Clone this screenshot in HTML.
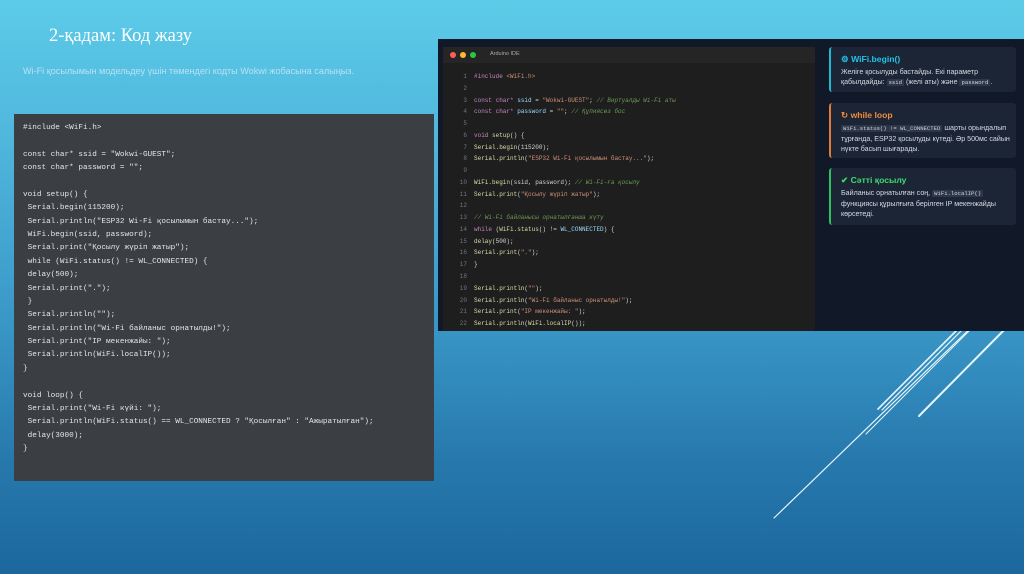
<!DOCTYPE html>
<html><head><meta charset="utf-8"><style>
*{margin:0;padding:0;box-sizing:border-box}
body{width:1024px;height:574px;overflow:hidden;position:relative;background:linear-gradient(180deg,#5ccbe8 0%,#4fb6dc 25%,#3a98c8 55%,#2779ad 80%,#1b679e 100%);font-family:"Liberation Sans","Noto Sans CJK SC",sans-serif}
.title{position:absolute;left:49px;top:26px;font-family:"Liberation Serif","Noto Serif CJK SC",serif;font-size:18.5px;color:#fff}
.sub{position:absolute;left:23px;top:66px;font-size:9.1px;color:#b8e2f2}
.code{position:absolute;left:14px;top:114px;width:420px;height:367px;background:#3b3e42;padding:8px 0 0 9px;font-family:"Liberation Mono","DejaVu Sans Mono",monospace;font-size:7.7px;line-height:13.38px;color:#e6e6e6;white-space:pre}
.panel{position:absolute;left:438px;top:39px;width:586px;height:292px;background:#111827}
.ide{position:absolute;left:5px;top:8px;width:372px;height:284px;background:#1e1e1e}
.bar{height:16px;background:#252526;position:relative}
.dot{position:absolute;top:5px;width:6px;height:6px;border-radius:50%}
.bar span{position:absolute;left:47px;top:4px;font-size:5.5px;color:#aaa}
.ln{position:absolute;left:0;top:24px;width:24px;text-align:right;font-family:"Liberation Mono",monospace;font-size:6px;line-height:11.76px;color:#6e7681;white-space:pre}
.src{position:absolute;left:31px;top:24px;font-family:"Liberation Mono",monospace;font-size:6px;line-height:11.76px;color:#d4d4d4;white-space:pre}
.k{color:#c586c0}.f{color:#dcdcaa}.s{color:#ce9178}.c{color:#6a9955;font-style:italic}.v{color:#9cdcfe}
.card{position:absolute;left:391px;width:187px;background:#1c2536;border-radius:3px;padding:6px 6px 5px 10px;font-size:7.1px;line-height:10px;color:#d6dbe3}
.card h4{font-size:8.6px;font-weight:bold;margin-bottom:2px;line-height:12px}
.card code{font-family:"Liberation Mono",monospace;font-size:5.6px;background:#2d3748;padding:0 2px;color:#cfd6e0}
</style></head><body>
<div class="title">2-қадам: Код жазу</div>
<div class="sub">Wi-Fi қосылымын модельдеу үшін төмендегі кодты Wokwi жобасына салыңыз.</div>
<div class="code">#include &lt;WiFi.h&gt;

const char* ssid = "Wokwi-GUEST";
const char* password = "";

void setup() {
 Serial.begin(115200);
 Serial.println("ESP32 Wi-Fi қосылымын бастау...");
 WiFi.begin(ssid, password);
 Serial.print("Қосылу жүріп жатыр");
 while (WiFi.status() != WL_CONNECTED) {
 delay(500);
 Serial.print(".");
 }
 Serial.println("");
 Serial.println("Wi-Fi байланыс орнатылды!");
 Serial.print("IP мекенжайы: ");
 Serial.println(WiFi.localIP());
}

void loop() {
 Serial.print("Wi-Fi күйі: ");
 Serial.println(WiFi.status() == WL_CONNECTED ? "Қосылған" : "Ажыратылған");
 delay(3000);
}</div>
<svg style="position:absolute;left:0;top:0" width="1024" height="574">
<g stroke="#e8f6fc" stroke-linecap="round">
<line x1="774" y1="518" x2="1010" y2="290" stroke-width="1.2"/>
<line x1="866" y1="434" x2="980" y2="320" stroke-width="1"/>
<line x1="878" y1="409" x2="965" y2="322" stroke-width="1.6"/>
<line x1="882" y1="410" x2="970" y2="322" stroke-width="1.2"/>
<line x1="919" y1="416" x2="1012" y2="322" stroke-width="2"/>
</g></svg>
<div class="panel">
<div class="ide">
<div class="bar"><i class="dot" style="left:7px;background:#ff5f56"></i><i class="dot" style="left:17px;background:#ffbd2e"></i><i class="dot" style="left:27px;background:#27c93f"></i><span>Arduino IDE</span></div>
<div class="ln">1
2
3
4
5
6
7
8
9
10
11
12
13
14
15
16
17
18
19
20
21
22</div>
<div class="src"><span class="k">#include</span> <span class="s">&lt;WiFi.h&gt;</span>

<span class="k">const char*</span> <span class="v">ssid</span> = <span class="s">"Wokwi-GUEST"</span>; <span class="c">// Виртуалды Wi-Fi аты</span>
<span class="k">const char*</span> <span class="v">password</span> = <span class="s">""</span>; <span class="c">// Құпиясөз бос</span>

<span class="k">void</span> <span class="f">setup</span>() {
<span class="f">Serial.begin</span>(115200);
<span class="f">Serial.println</span>(<span class="s">"ESP32 Wi-Fi қосылымын бастау..."</span>);

<span class="f">WiFi.begin</span>(ssid, password); <span class="c">// Wi-Fi-ға қосылу</span>
<span class="f">Serial.print</span>(<span class="s">"Қосылу жүріп жатыр"</span>);

<span class="c">// Wi-Fi байланысы орнатылғанша күту</span>
<span class="k">while</span> (<span class="f">WiFi.status</span>() != <span class="v">WL_CONNECTED</span>) {
<span class="f">delay</span>(500);
<span class="f">Serial.print</span>(<span class="s">"."</span>);
}

<span class="f">Serial.println</span>(<span class="s">""</span>);
<span class="f">Serial.println</span>(<span class="s">"Wi-Fi байланыс орнатылды!"</span>);
<span class="f">Serial.print</span>(<span class="s">"IP мекенжайы: "</span>);
<span class="f">Serial.println</span>(<span class="f">WiFi.localIP</span>());</div>
</div>
<div class="card" style="top:8px;height:45px;border-left:2px solid #22b8cf"><h4 style="color:#22c3e6">&#9881; WiFi.begin()</h4>Желіге қосылуды бастайды. Екі параметр қабылдайды: <code>ssid</code> (желі аты) және <code>password</code>.</div>
<div class="card" style="top:64px;height:55px;border-left:2px solid #e07b39"><h4 style="color:#f08c3c">&#8635; while loop</h4><code>WiFi.status() != WL_CONNECTED</code> шарты орындалып тұрғанда, ESP32 қосылуды күтеді. Әр 500мс сайын нүкте басып шығарады.</div>
<div class="card" style="top:129px;height:57px;border-left:2px solid #2fbf5f"><h4 style="color:#3ddc6e">&#10004; Сәтті қосылу</h4>Байланыс орнатылған соң, <code>WiFi.localIP()</code> функциясы құрылғыға берілген IP мекенжайды көрсетеді.</div>
</div>
</body></html>
